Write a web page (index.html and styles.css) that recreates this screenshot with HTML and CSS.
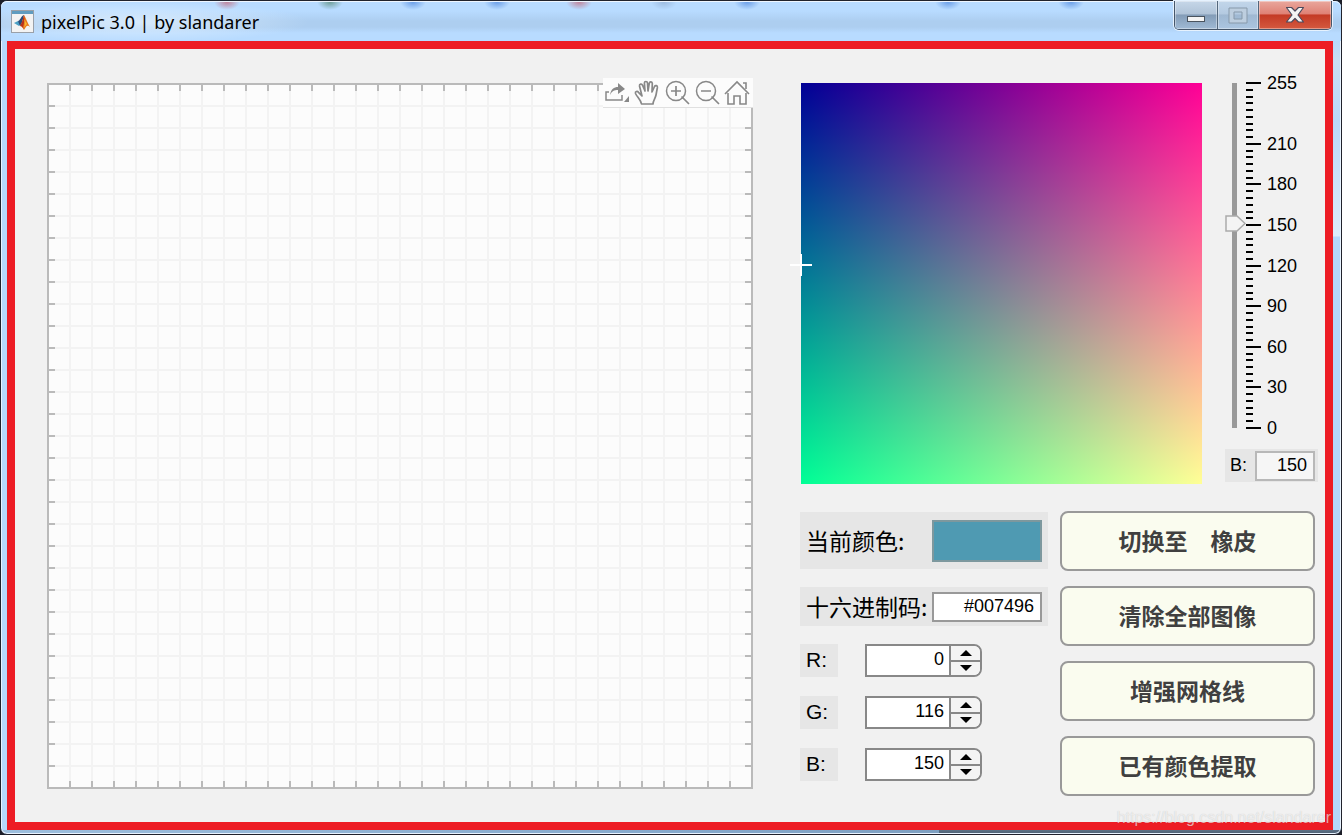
FILE: index.html
```html
<!DOCTYPE html>
<html lang="zh-CN">
<head>
<meta charset="utf-8">
<title>pixelPic 3.0 | by slandarer</title>
<link rel="stylesheet" href="styles.css">
</head>
<body>
<div class="window">
  <header class="titlebar">
    <svg class="app-icon" viewBox="0 0 23 23" aria-hidden="true">
      <rect x=".5" y=".5" width="22" height="22" fill="#f3f3f3" stroke="#9aa0a8"/>
      <rect x="1" y="1" width="21" height="3" fill="#5f9cc0"/>
      <path d="M3 13l4-2 3 3-2 2z" fill="#4a9fc4"/>
      <path d="M7 11c2 0 3-5 6-6l-2 8-2 3z" fill="#2a4a78"/>
      <path d="M13 5c2 3 3 7 6 12-3-3-4 0-6 3-1-2-2-4-4-4 2-3 3-7 4-11z" fill="#e8781c"/>
      <path d="M13 5c1 4 0 9-1 12l1 3c-1-2-2-4-4-4 2-3 3-7 4-11z" fill="#b8321c"/>
      <path d="M13 9c1 3 1 6 0 9 1-2 2-3 3-4z" fill="#f9b833"/>
    </svg>
    <h1 class="title">pixelPic 3.0 | by slandarer</h1>
    <div class="controls">
      <button class="ctl" type="button" aria-label="最小化"><svg width="20" height="8" viewBox="0 0 20 8"><rect x="1.500" y="1.500" width="17" height="5" fill="#f4f4f4" stroke="#4a545f"/></svg></button>
      <button class="ctl ctl-max" type="button" aria-label="最大化"><svg width="20" height="17" viewBox="0 0 20 17"><path fill-rule="evenodd" d="M1 1h18v15H1zM6 5v7h8V5z" fill="#bdcedf" stroke="#8799aa"/></svg></button>
      <button class="ctl ctl-close" type="button" aria-label="关闭"><svg width="20" height="18" viewBox="0 0 20 18"><path d="M1.500 1.500h5L10 5l3.500-3.500h5L13 9l5.500 7h-5L10 12.500 6.500 16h-5L7 9z" fill="#f4f4f4" stroke="#4c4a5c" stroke-width="1.200" stroke-linejoin="round"/></svg></button>
    </div>
  </header>

  <main class="client">
    <section class="board">
      <svg class="grid" viewBox="0 0 706 706" role="img" aria-label="像素画布">
        <defs>
          <pattern id="cell" x="0" y="0" width="22" height="22" patternUnits="userSpaceOnUse"><path d="M0 1H22M1 0V22" stroke="#f3f3f3" stroke-width="2"/></pattern>
        </defs>
        <rect x="1" y="1" width="704" height="704" fill="#fcfcfc"/>
        <rect x="1" y="1" width="704" height="704" fill="url(#cell)"/>
        <g fill="none" stroke="#bababa">
          <path d="M1 4.500H705M1 701.500H705" stroke-width="7" stroke-dasharray="2 20" stroke-dashoffset="1"/>
          <path d="M4.500 1V705M701.500 1V705" stroke-width="7" stroke-dasharray="2 20" stroke-dashoffset="1"/>
          <rect x="1" y="1" width="704" height="704" stroke-width="2"/>
        </g>
      </svg>
      <div class="tools">
        <button class="tool" type="button" aria-label="导出"><svg viewBox="0 0 28 28"><path d="M6 14H3v8h16v-5" fill="none" stroke="#888" stroke-width="1.500"/><path d="M7 17c1-6 4-8 8-8V5l7 6-7 5v-4c-4 0-6 1-8 5zM21 24h5v-6z" fill="#888"/></svg></button>
        <button class="tool" type="button" aria-label="平移"><svg viewBox="0 0 28 28"><path d="M8.500 26C8 22 4 19 2.500 15.500c-.6-2 1.800-2.800 3-1.200L9 18 6.500 8c-.3-2 2.300-2.700 3-.8L12 13l-.6-8c0-2 2.900-2 3.100 0L15 13l1.300-7.800c.4-1.900 3-1.600 3 .3L19 14l2.500-5.500c.9-1.700 3.200-.9 2.900 1L23 17c-.8 4-3 5.500-3 9z" fill="none" stroke="#888" stroke-width="1.700" stroke-linejoin="round"/></svg></button>
        <button class="tool" type="button" aria-label="放大"><svg viewBox="0 0 28 28"><path d="M18.500 18.500L26 26M13 8v10M8 13h10" fill="none" stroke="#888" stroke-width="1.700"/><circle cx="13" cy="13" r="9.500" fill="none" stroke="#888" stroke-width="1.500"/></svg></button>
        <button class="tool" type="button" aria-label="缩小"><svg viewBox="0 0 28 28"><path d="M18.500 18.500L26 26M8 13h10" fill="none" stroke="#888" stroke-width="1.700"/><circle cx="13" cy="13" r="9.500" fill="none" stroke="#888" stroke-width="1.500"/></svg></button>
        <button class="tool" type="button" aria-label="还原视图"><svg viewBox="0 0 28 28"><path d="M2 16L14 4l12 12M5 15v11h6v-8h6v8h6V15M20 5h3v6" fill="none" stroke="#888" stroke-width="1.600"/></svg></button>
      </div>
    </section>

    <section class="panel">
      <div class="picker">
        <div class="field" role="img" aria-label="颜色选择区"><svg class="cross" width="22" height="22" viewBox="0 0 22 22"><path d="M11 0v22M0 11h22" stroke="#fff" stroke-width="2"/></svg></div>
        <div class="blue">
          <div class="scale">
            <svg class="ruler" width="93" height="345" viewBox="0 0 93 345" aria-hidden="true">
              <rect x="7" width="5" height="345" fill="#999"/>
              <g id="minor" stroke="#000" stroke-width="2"></g>
              <g id="major" class="ruler-label"></g>
            </svg>
            <input class="slider" type="range" min="0" max="255" value="150" aria-label="蓝色分量">
          </div>
          <div class="blue-value">
            <label for="blue-edit">B:</label>
            <input class="edit edit-soft" id="blue-edit" type="text" value="150">
          </div>
        </div>
      </div>

      <div class="lower">
        <div class="form">
          <div class="row row-current"><span>当前颜色:</span><div class="swatch"></div></div>
          <div class="row row-hex"><label for="hex">十六进制码:</label><input class="edit" id="hex" type="text" value="#007496"></div>
          <div class="rgb">
            <div class="channel"><label class="channel-name" for="r">R:</label><div class="spinner"><input id="r" type="text" value="0"><div class="arrows"><button type="button" aria-label="R 增加"><svg viewBox="0 0 12 6"><path d="M0 6L6 0l6 6z"/></svg></button><button type="button" aria-label="R 减少"><svg viewBox="0 0 12 6"><path d="M0 0h12L6 6z"/></svg></button></div></div></div>
            <div class="channel"><label class="channel-name" for="g">G:</label><div class="spinner"><input id="g" type="text" value="116"><div class="arrows"><button type="button" aria-label="G 增加"><svg viewBox="0 0 12 6"><path d="M0 6L6 0l6 6z"/></svg></button><button type="button" aria-label="G 减少"><svg viewBox="0 0 12 6"><path d="M0 0h12L6 6z"/></svg></button></div></div></div>
            <div class="channel"><label class="channel-name" for="b">B:</label><div class="spinner"><input id="b" type="text" value="150"><div class="arrows"><button type="button" aria-label="B 增加"><svg viewBox="0 0 12 6"><path d="M0 6L6 0l6 6z"/></svg></button><button type="button" aria-label="B 减少"><svg viewBox="0 0 12 6"><path d="M0 0h12L6 6z"/></svg></button></div></div></div>
          </div>
        </div>
        <div class="actions">
          <button class="action" type="button">切换至　橡皮</button>
          <button class="action" type="button">清除全部图像</button>
          <button class="action" type="button">增强网格线</button>
          <button class="action" type="button">已有颜色提取</button>
        </div>
      </div>
    </section>
  </main>
  <div class="watermark">https://blog.csdn.net/slandarer</div>
</div>
<script src="ruler.js"></script>
</body>
</html>
```

FILE: styles.css
```css
* { box-sizing: border-box; }

body {
  margin: 0;
  background: #1c1e28;
  color: #000;
  font-family: "Liberation Sans", "Noto Sans CJK SC", sans-serif;
  font-size: 18px;
}

button, input { font: inherit; color: inherit; margin: 0; }

.window {
  position: relative;
  display: flex;
  flex-direction: column;
  min-height: 100vh;
  padding-bottom: 4px;
  border: 1px solid #20222c;
  border-radius: 7px;
  background:
    linear-gradient(#5d7186, #4d6074) right bottom / 30% 4px no-repeat,
    linear-gradient(90deg, #9dbedd, #86a9cc 50%, #7391b0) left bottom / 100% 4px no-repeat,
    linear-gradient(#c4dffa00 40px, #c9ddf3 60px, #b9d9fa 120px, #dcebfa 235px, #b4d7fb 236px) right top / 9px 100% no-repeat,
    #b6d8fb;
  box-shadow: inset 0 0 0 1px #e8f3ff;
}

.titlebar {
  display: flex;
  align-items: flex-start;
  height: 40px;
  padding-left: 10px;
  border-radius: 6px 6px 0 0;
  background:
    radial-gradient(ellipse at center, #6f9f9a, #6f9f9a00 70%) 316px -7px / 26px 16px no-repeat,
    radial-gradient(ellipse at center, #6b9fe8, #6b9fe800 70%) 399px -7px / 26px 16px no-repeat,
    radial-gradient(ellipse at center, #6b9fe8, #6b9fe800 70%) 483px -7px / 26px 16px no-repeat,
    radial-gradient(ellipse at center, #c0859c, #c0859c00 70%) 213px -7px / 26px 16px no-repeat,
    radial-gradient(ellipse at center, #c0859c, #c0859c00 70%) 565px -7px / 26px 16px no-repeat,
    radial-gradient(ellipse at center, #9cbbe0, #9cbbe000 70%) 650px -7px / 26px 16px no-repeat,
    radial-gradient(ellipse at center, #6b9fe8, #6b9fe800 70%) 733px -7px / 26px 16px no-repeat,
    radial-gradient(ellipse at center, #6b9fe8, #6b9fe800 70%) 934px -7px / 26px 16px no-repeat,
    radial-gradient(ellipse at center, #6b9fe8, #6b9fe800 70%) 1057px -7px / 26px 16px no-repeat,
    radial-gradient(ellipse at center, #e2f1ffd0, #e2f1ff00 70%) -40px 0 / 350px 42px no-repeat,
    linear-gradient(#b8dbff 10px, #adcef0 20px, #adcef0 26px, #b8dbff 32px);
  box-shadow: inset 0 1px 0 #eef6ff;
}

.app-icon { width: 23px; height: 23px; margin-top: 9px; }

.title {
  flex: 1;
  margin: 8px 0 0 7px;
  font: 400 18px/26px "Noto Sans", "Open Sans", sans-serif;
  white-space: nowrap;
}

.controls {
  display: flex;
  height: 29px;
  margin-right: 9px;
  overflow: hidden;
  border: 1px solid #46566a;
  border-top: 0;
  border-radius: 0 0 5px 5px;
  box-shadow: 0 0 0 1px #e6f2fe;
}

.ctl {
  display: flex;
  align-items: center;
  justify-content: center;
  width: 43px;
  padding: 8px 0 0;
  border: 0;
  border-right: 1px solid #54677c;
  background: linear-gradient(#c6d7e8 0, #b0c3d8 46%, #839cb7 50%, #a0bad5);
  box-shadow: inset 0 0 0 1px #ffffff60;
}

.ctl-max {
  width: 41px;
  padding: 0;
  background: linear-gradient(#c2d6ea 0, #b4cae1 46%, #9fb8d2 50%, #abc5e0);
}

.ctl-close {
  width: 72px;
  padding: 0;
  border-right: 0;
  background: linear-gradient(#e9a79d 0, #df8175 46%, #c43a25 50%, #d4593f);
}

.client {
  display: grid;
  flex: 1;
  grid-template-columns: minmax(0, 1fr) 518px;
  align-items: start;
  gap: 47px;
  margin: 0 8px 0 6px;
  padding: 34px 7px 25px 32px;
  border: 8px solid #ed1c24;
  background: #f1f1f1;
}

.board { position: relative; }

.grid { display: block; width: 100%; height: auto; }

.tools {
  position: absolute;
  top: -5px;
  right: 0;
  display: flex;
  width: 150px;
  height: 29px;
  background: #fcfcfc;
  box-shadow: 0 1px 0 #e0e0e0;
}

.tool { flex: 1; padding: 0 2px 2px 0; border: 0; background: none; }

.tool svg { display: block; width: 28px; height: 28px; }

.picker { display: flex; justify-content: space-between; padding-left: 1px; }

.field {
  position: relative;
  width: 401px;
  height: 401px;
  background:
    linear-gradient(90deg, #000, #f00),
    linear-gradient(#000, #0f0),
    #000096;
  background-blend-mode: screen;
}

.cross { position: absolute; top: 171px; left: -11px; }

.blue { width: 93px; }

.scale { position: relative; height: 345px; }

.ruler { display: block; overflow: visible; }

.ruler-label { font-size: 18px; }

.slider {
  position: absolute;
  top: -10px;
  left: 0;
  width: 21px;
  height: 361px;
  appearance: none;
  background: none;
  writing-mode: vertical-lr;
  direction: rtl;
}

.slider::-webkit-slider-thumb {
  width: 21px;
  height: 17px;
  appearance: none;
  background: url("data:image/svg+xml,%3Csvg xmlns='http://www.w3.org/2000/svg' width='21' height='17'%3E%3Cpath d='M1 1h11l8 7.500-8 7.500H1z' fill='%23f4f4f4' stroke='%23aaa' stroke-width='1.500'/%3E%3C/svg%3E") no-repeat;
}

.blue-value {
  display: flex;
  align-items: center;
  justify-content: space-between;
  height: 33px;
  margin-top: 21px;
  padding: 0 3px 0 5px;
  background: #e6e6e6;
}

.edit {
  width: 110px;
  height: 30px;
  padding: 0 6px;
  border: 2px solid #999;
  border-radius: 0;
  background: #fff;
  text-align: right;
}

.edit-soft { width: 60px; border-color: #b8b8b8; background: #f6f6f6; }

.lower {
  display: grid;
  grid-template-columns: 248px 255px;
  align-items: start;
  gap: 12px;
  margin-top: 27px;
}

.form { display: flex; flex-direction: column; gap: 18px; padding-top: 1px; }

.row {
  display: flex;
  align-items: center;
  justify-content: space-between;
  padding: 0 6px;
  background: #e6e6e6;
  font: 23px/33px "Noto Sans CJK SC", sans-serif;
  white-space: nowrap;
}

.row .edit { font: 18px "Liberation Sans", sans-serif; }

.row-current { height: 57px; }

.row-hex { height: 39px; }

.swatch { width: 110px; height: 42px; border: 2px solid #7d989e; background: #4f9ab2; }

.rgb { display: flex; flex-direction: column; gap: 19px; }

.channel { display: flex; gap: 27px; }

.channel-name {
  width: 38px;
  height: 33px;
  padding-left: 6px;
  background: #e6e6e6;
  font-size: 21px;
  line-height: 32px;
}

.spinner {
  display: flex;
  width: 117px;
  height: 33px;
  overflow: hidden;
  border: 2px solid #888;
  border-radius: 0 8px 8px 0;
  background: #fff;
}

.spinner input {
  flex: 1;
  min-width: 0;
  padding: 0 5px 2px;
  border: 0;
  background: none;
  text-align: right;
}

.arrows { display: flex; flex-direction: column; width: 31px; border-left: 2px solid #888; }

.arrows button {
  display: flex;
  flex: 1;
  align-items: center;
  justify-content: center;
  padding: 0;
  border: 0;
  background: #f4f4f4;
}

.arrows button + button { border-top: 2px solid #888; }

.arrows svg { width: 12px; height: 6px; }

.actions { display: flex; flex-direction: column; gap: 15px; }

.action {
  height: 60px;
  padding: 0 0 2px;
  border: 2px solid #999;
  border-radius: 8px;
  background: #fafcef;
  color: #404040;
  font: 700 23px/33px "Noto Sans CJK SC", sans-serif;
}

.watermark {
  position: absolute;
  right: 10px;
  bottom: 7px;
  color: #ffffffa0;
  font-size: 16px;
  text-shadow: 0 0 1px #00000030;
}
```

FILE: ruler.js
```javascript
// Draws the ticks of the 0-255 blue scale: a short one every 5 units, a long one at each label.
const NS = 'http://www.w3.org/2000/svg';
const HEIGHT = 345;
const labels = [0, 30, 60, 90, 120, 150, 180, 210, 255];
const minor = document.getElementById('minor');
const major = document.getElementById('major');

for (let value = 0; value <= 255; value += 5) {
  const y = Math.round(HEIGHT * (1 - value / 255));
  const line = document.createElementNS(NS, 'line');
  line.setAttribute('x1', 21);
  line.setAttribute('x2', labels.includes(value) ? 36 : 28);
  line.setAttribute('y1', y);
  line.setAttribute('y2', y);
  minor.appendChild(line);
  if (labels.includes(value)) {
    const text = document.createElementNS(NS, 'text');
    text.setAttribute('x', 42);
    text.setAttribute('y', y + 6);
    text.textContent = value;
    major.appendChild(text);
  }
}
```
